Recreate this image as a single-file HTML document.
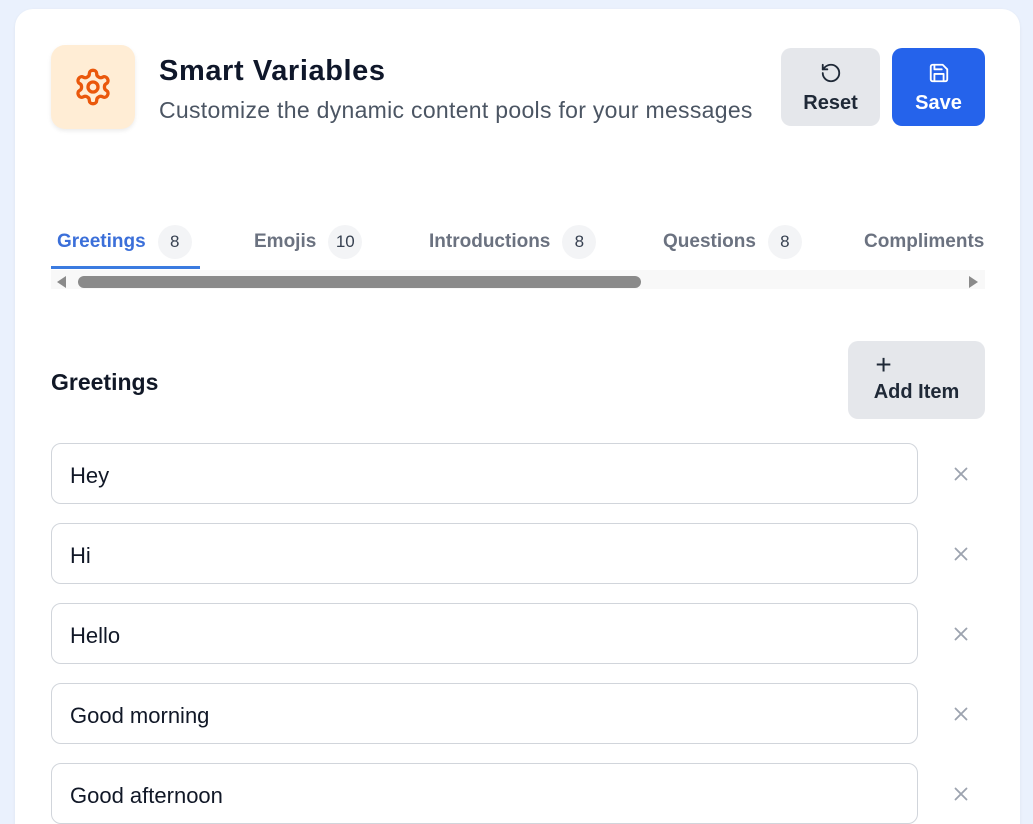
<!DOCTYPE html><html><head><style>
html,body{margin:0;width:1033px;height:824px;overflow:hidden}
body{background:#eaf1fd;font-family:"Liberation Sans",sans-serif;position:relative}
.card{position:absolute;left:15px;top:9px;width:1005px;height:840px;background:#fff;border-radius:18px;box-shadow:0 1px 3px rgba(0,0,0,.06)}
.a{position:absolute}
.icon{left:51px;top:45px;width:84px;height:84px;border-radius:14px;background:#ffedd5;box-shadow:0 2px 4px rgba(0,0,0,.08);display:flex;align-items:center;justify-content:center}
.btn{border-radius:10px;text-align:center;font-size:20px;font-weight:bold;box-sizing:border-box;padding-top:14px}
.tab{font-size:19px;font-weight:bold;color:#6b7280;display:flex;align-items:center;white-space:nowrap;height:34px}
.badge{display:inline-block;width:34px;height:34px;border-radius:17px;background:#f3f4f6;color:#374151;font-size:17px;font-weight:normal;text-align:center;line-height:34px;margin-left:12px}
.inp{left:51px;width:867px;height:61px;border:1px solid #d1d5db;border-radius:10px;box-sizing:border-box;font-size:22px;color:#111827;padding-left:18px;line-height:63px}
.x{left:950px;width:22px;height:22px}
</style></head><body>
<div class="card"></div>
<div class="a icon"><svg width="40" height="40" viewBox="0 0 24 24" fill="none" stroke="#ea580c" stroke-width="2" stroke-linecap="round" stroke-linejoin="round"><path d="M12.22 2h-.44a2 2 0 0 0-2 2v.18a2 2 0 0 1-1 1.73l-.43.25a2 2 0 0 1-2 0l-.15-.08a2 2 0 0 0-2.73.73l-.22.38a2 2 0 0 0 .73 2.730l.15.1a2 2 0 0 1 1 1.72v.51a2 2 0 0 1-1 1.74l-.15.09a2 2 0 0 0-.73 2.73l.22.38a2 2 0 0 0 2.73.73l.15-.08a2 2 0 0 1 2 0l.43.25a2 2 0 0 1 1 1.73V20a2 2 0 0 0 2 2h.44a2 2 0 0 0 2-2v-.18a2 2 0 0 1 1-1.73l.43-.25a2 2 0 0 1 2 0l.15.08a2 2 0 0 0 2.73-.73l.22-.39a2 2 0 0 0-.73-2.73l-.15-.08a2 2 0 0 1-1-1.74v-.5a2 2 0 0 1 1-1.74l.15-.09a2 2 0 0 0 .73-2.73l-.22-.38a2 2 0 0 0-2.73-.73l-.15.08a2 2 0 0 1-2 0l-.43-.25a2 2 0 0 1-1-1.730V4a2 2 0 0 0-2-2z"/><circle cx="12" cy="12" r="3"/></svg></div>
<div class="a" style="left:159px;top:55px;font-size:29px;font-weight:bold;color:#0f172a;letter-spacing:0.6px">Smart Variables</div>
<div class="a" style="left:159px;top:97px;font-size:23px;color:#4b5563;letter-spacing:0.3px">Customize the dynamic content pools for your messages</div>
<div class="a btn" style="left:781px;top:48px;width:99px;height:78px;background:#e5e7eb;color:#1f2937"><svg width="22" height="22" viewBox="0 0 24 24" fill="none" stroke="#1f2937" stroke-width="2" stroke-linecap="round" stroke-linejoin="round"><path d="M3 12a9 9 0 1 0 9-9 9.75 9.75 0 0 0-6.74 2.74L3 8"/><path d="M3 3v5h5"/></svg><div style="margin-top:2px">Reset</div></div>
<div class="a btn" style="left:892px;top:48px;width:93px;height:78px;background:#2563eb;color:#fff"><svg width="22" height="22" viewBox="0 0 24 24" fill="none" stroke="#fff" stroke-width="2" stroke-linecap="round" stroke-linejoin="round"><path d="M19 21H5a2 2 0 0 1-2-2V5a2 2 0 0 1 2-2h11l5 5v11a2 2 0 0 1-2 2z"/><path d="M17 21v-8H7v8"/><path d="M7 3v5h8"/></svg><div style="margin-top:2px">Save</div></div>
<div class="a" style="left:51px;top:215px;width:934px;height:60px;overflow:hidden">
<div class="a tab" style="left:6px;top:10px;color:#3b6fd9">Greetings<span class="badge">8</span></div>
<div class="a tab" style="left:203px;top:10px">Emojis<span class="badge">10</span></div>
<div class="a tab" style="left:378px;top:10px">Introductions<span class="badge">8</span></div>
<div class="a tab" style="left:612px;top:10px">Questions<span class="badge">8</span></div>
<div class="a tab" style="left:813px;top:10px">Compliments</div>
</div>
<div class="a" style="left:51px;top:266px;width:149px;height:3px;background:#3b7be0"></div>
<div class="a" style="left:51px;top:270px;width:934px;height:19px;background:#f8f8f8"></div>
<div class="a" style="left:78px;top:276px;width:563px;height:12px;background:#8a8a8a;border-radius:6px"></div>
<div class="a" style="left:57px;top:276px;width:0;height:0;border-top:6px solid transparent;border-bottom:6px solid transparent;border-right:9px solid #8a8a8a"></div>
<div class="a" style="left:969px;top:276px;width:0;height:0;border-top:6px solid transparent;border-bottom:6px solid transparent;border-left:9px solid #8a8a8a"></div>
<div class="a" style="left:51px;top:369px;font-size:23px;font-weight:bold;color:#111827">Greetings</div>
<div class="a btn" style="left:848px;top:341px;width:137px;height:78px;background:#e5e7eb;color:#1f2937;padding-top:12px"><div style="font-size:28px;font-weight:normal;line-height:24px;margin-left:-66px">+</div><div style="margin-top:4px">Add Item</div></div>
<div class="a inp" style="top:443px">Hey</div>
<div class="a inp" style="top:523px">Hi</div>
<div class="a inp" style="top:603px">Hello</div>
<div class="a inp" style="top:683px">Good morning</div>
<div class="a inp" style="top:763px">Good afternoon</div>
<svg class="a x" style="top:463px" viewBox="0 0 24 24" stroke="#9ca3af" stroke-width="2" stroke-linecap="round"><path d="M6 6l12 12M18 6L6 18"/></svg>
<svg class="a x" style="top:543px" viewBox="0 0 24 24" stroke="#9ca3af" stroke-width="2" stroke-linecap="round"><path d="M6 6l12 12M18 6L6 18"/></svg>
<svg class="a x" style="top:623px" viewBox="0 0 24 24" stroke="#9ca3af" stroke-width="2" stroke-linecap="round"><path d="M6 6l12 12M18 6L6 18"/></svg>
<svg class="a x" style="top:703px" viewBox="0 0 24 24" stroke="#9ca3af" stroke-width="2" stroke-linecap="round"><path d="M6 6l12 12M18 6L6 18"/></svg>
<svg class="a x" style="top:783px" viewBox="0 0 24 24" stroke="#9ca3af" stroke-width="2" stroke-linecap="round"><path d="M6 6l12 12M18 6L6 18"/></svg>
</body></html>
